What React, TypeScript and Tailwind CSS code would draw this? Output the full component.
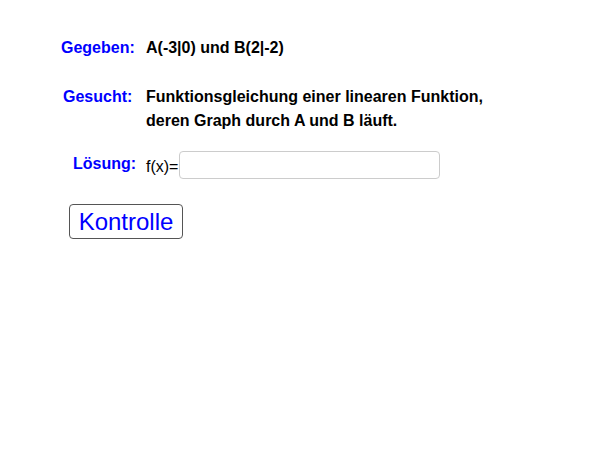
export default function App() {
  return (
    <div className="h-[466px] w-[607px] bg-white pt-[36px] font-['Liberation_Sans',Arial,sans-serif] text-[16px] leading-[24px] text-black">
      {/* Gegeben */}
      <div className="flex">
        <div className="ml-[61px] w-[85px] font-bold text-[#0000ff]">Gegeben:</div>
        <div className="font-bold">A(-3|0) und B(2|-2)</div>
      </div>

      {/* Gesucht */}
      <div className="mt-[25px] flex">
        <div className="ml-[63px] w-[83px] font-bold text-[#0000ff]">Gesucht:</div>
        <div className="font-bold">
          Funktionsgleichung einer linearen Funktion,
          <br />
          deren Graph durch A und B läuft.
        </div>
      </div>

      {/* Lösung */}
      <div className="mt-[18px] flex items-start">
        <div className="ml-[73px] w-[73px] pt-[1px] font-bold text-[#0000ff]">Lösung:</div>
        <div className="pt-[4px]">f(x)=</div>
        <input
          type="text"
          className="ml-[1px] h-[28px] w-[261px] rounded-[4px] border border-[#cccccc] bg-white px-2 outline-none"
        />
      </div>

      <button className="ml-[69px] mt-[25px] flex h-[35px] w-[114px] items-center justify-center rounded-[4px] border border-[#555555] bg-white text-[24px] leading-none text-[#0000ff]">
        Kontrolle
      </button>
    </div>
  );
}
